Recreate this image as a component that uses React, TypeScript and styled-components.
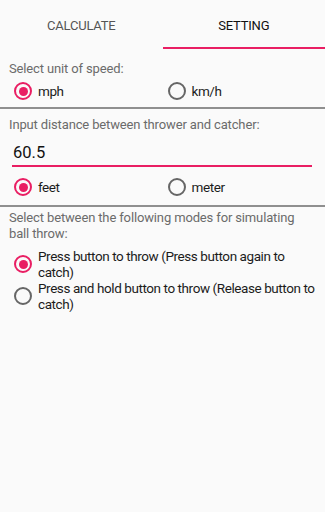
import styled, { createGlobalStyle } from 'styled-components';

const GlobalStyle = createGlobalStyle`
  html, body {
    margin: 0;
    padding: 0;
    background: #fafafa;
    font-family: Roboto, 'Liberation Sans', sans-serif;
    color: #212121;
  }
`;

const PINK = '#e91e63';

export default function App() {
  return (
    <>
      <GlobalStyle />
      <Page>
        <Tabs>
          <Tab>CALCULATE</Tab>
          <Tab $active>SETTING</Tab>
        </Tabs>

        <Section $paddingTop={12} $paddingBottom={4}>
          <Label>Select unit of speed:</Label>
          <RadioGrid>
            <RadioOption $checked>mph</RadioOption>
            <RadioOption>km/h</RadioOption>
          </RadioGrid>
        </Section>

        <Section $paddingTop={8} $paddingBottom={6}>
          <Label>Input distance between thrower and catcher:</Label>
          <DistanceInput defaultValue='60.5' />
          <RadioGrid $marginTop={8}>
            <RadioOption $checked>feet</RadioOption>
            <RadioOption>meter</RadioOption>
          </RadioGrid>
        </Section>

        <Section $paddingTop={3} $paddingBottom={0} $noBorder>
          <Label>Select between the following modes for simulating ball throw:</Label>
          <ModeList>
            <RadioOption $checked>Press button to throw (Press button again to catch)</RadioOption>
            <RadioOption>Press and hold button to throw (Release button to catch)</RadioOption>
          </ModeList>
        </Section>
      </Page>
    </>
  );
}

function RadioOption({ $checked, children }: { $checked?: boolean; children: React.ReactNode }) {
  return (
    <RadioLabel>
      <RadioCircle $checked={$checked}>{$checked && <RadioDot />}</RadioCircle>
      <RadioText>{children}</RadioText>
    </RadioLabel>
  );
}

const Page = styled.div`
  width: 325px;
  min-height: 512px;
  background: #fafafa;
`;

const Tabs = styled.div`
  display: flex;
  height: 49px;
`;

const Tab = styled.div<{ $active?: boolean }>`
  flex: 1;
  display: flex;
  align-items: center;
  justify-content: center;
  box-sizing: border-box;
  padding-top: 3px;
  font-size: 13px;
  letter-spacing: -0.2px;
  color: ${({ $active }) => ($active ? '#111' : '#555')};
  border-bottom: 2px solid ${({ $active }) => ($active ? PINK : 'transparent')};
`;

const Section = styled.div<{ $paddingTop: number; $paddingBottom: number; $noBorder?: boolean }>`
  padding: ${({ $paddingTop, $paddingBottom }) => `${$paddingTop}px 9px ${$paddingBottom}px`};
  border-bottom: ${({ $noBorder }) => ($noBorder ? 'none' : '2px solid #8f8f8f')};
`;

const Label = styled.div`
  font-size: 13px;
  letter-spacing: -0.14px;
  line-height: 16px;
  color: #6b6b6b;
`;

const RadioGrid = styled.div<{ $marginTop?: number }>`
  display: grid;
  grid-template-columns: 1fr 1fr;
  height: 24px;
  margin-top: ${({ $marginTop }) => $marginTop ?? 2}px;
`;

const ModeList = styled.div`
  display: flex;
  flex-direction: column;
  margin-top: 6px;
`;

const RadioLabel = styled.label`
  display: flex;
  align-items: center;
  padding-left: 5px;
`;

const RadioCircle = styled.span<{ $checked?: boolean }>`
  flex: none;
  display: flex;
  align-items: center;
  justify-content: center;
  box-sizing: border-box;
  width: 18px;
  height: 18px;
  border-radius: 50%;
  border: 2px solid ${({ $checked }) => ($checked ? PINK : '#666')};
`;

const RadioDot = styled.span`
  width: 9px;
  height: 9px;
  border-radius: 50%;
  background: ${PINK};
`;

const RadioText = styled.span`
  margin-left: 6px;
  font-size: 13.5px;
  letter-spacing: -0.42px;
  line-height: 16px;
  color: #1c1c1c;
`;

const DistanceInput = styled.input`
  display: block;
  box-sizing: border-box;
  width: calc(100% - 7px);
  margin: 4px 0 0 3px;
  height: 30px;
  padding: 2px 1px 0;
  border: none;
  border-bottom: 2px solid ${PINK};
  background: transparent;
  outline: none;
  font-family: Roboto, 'Liberation Sans', sans-serif;
  font-size: 16.5px;
  color: #111;
`;
